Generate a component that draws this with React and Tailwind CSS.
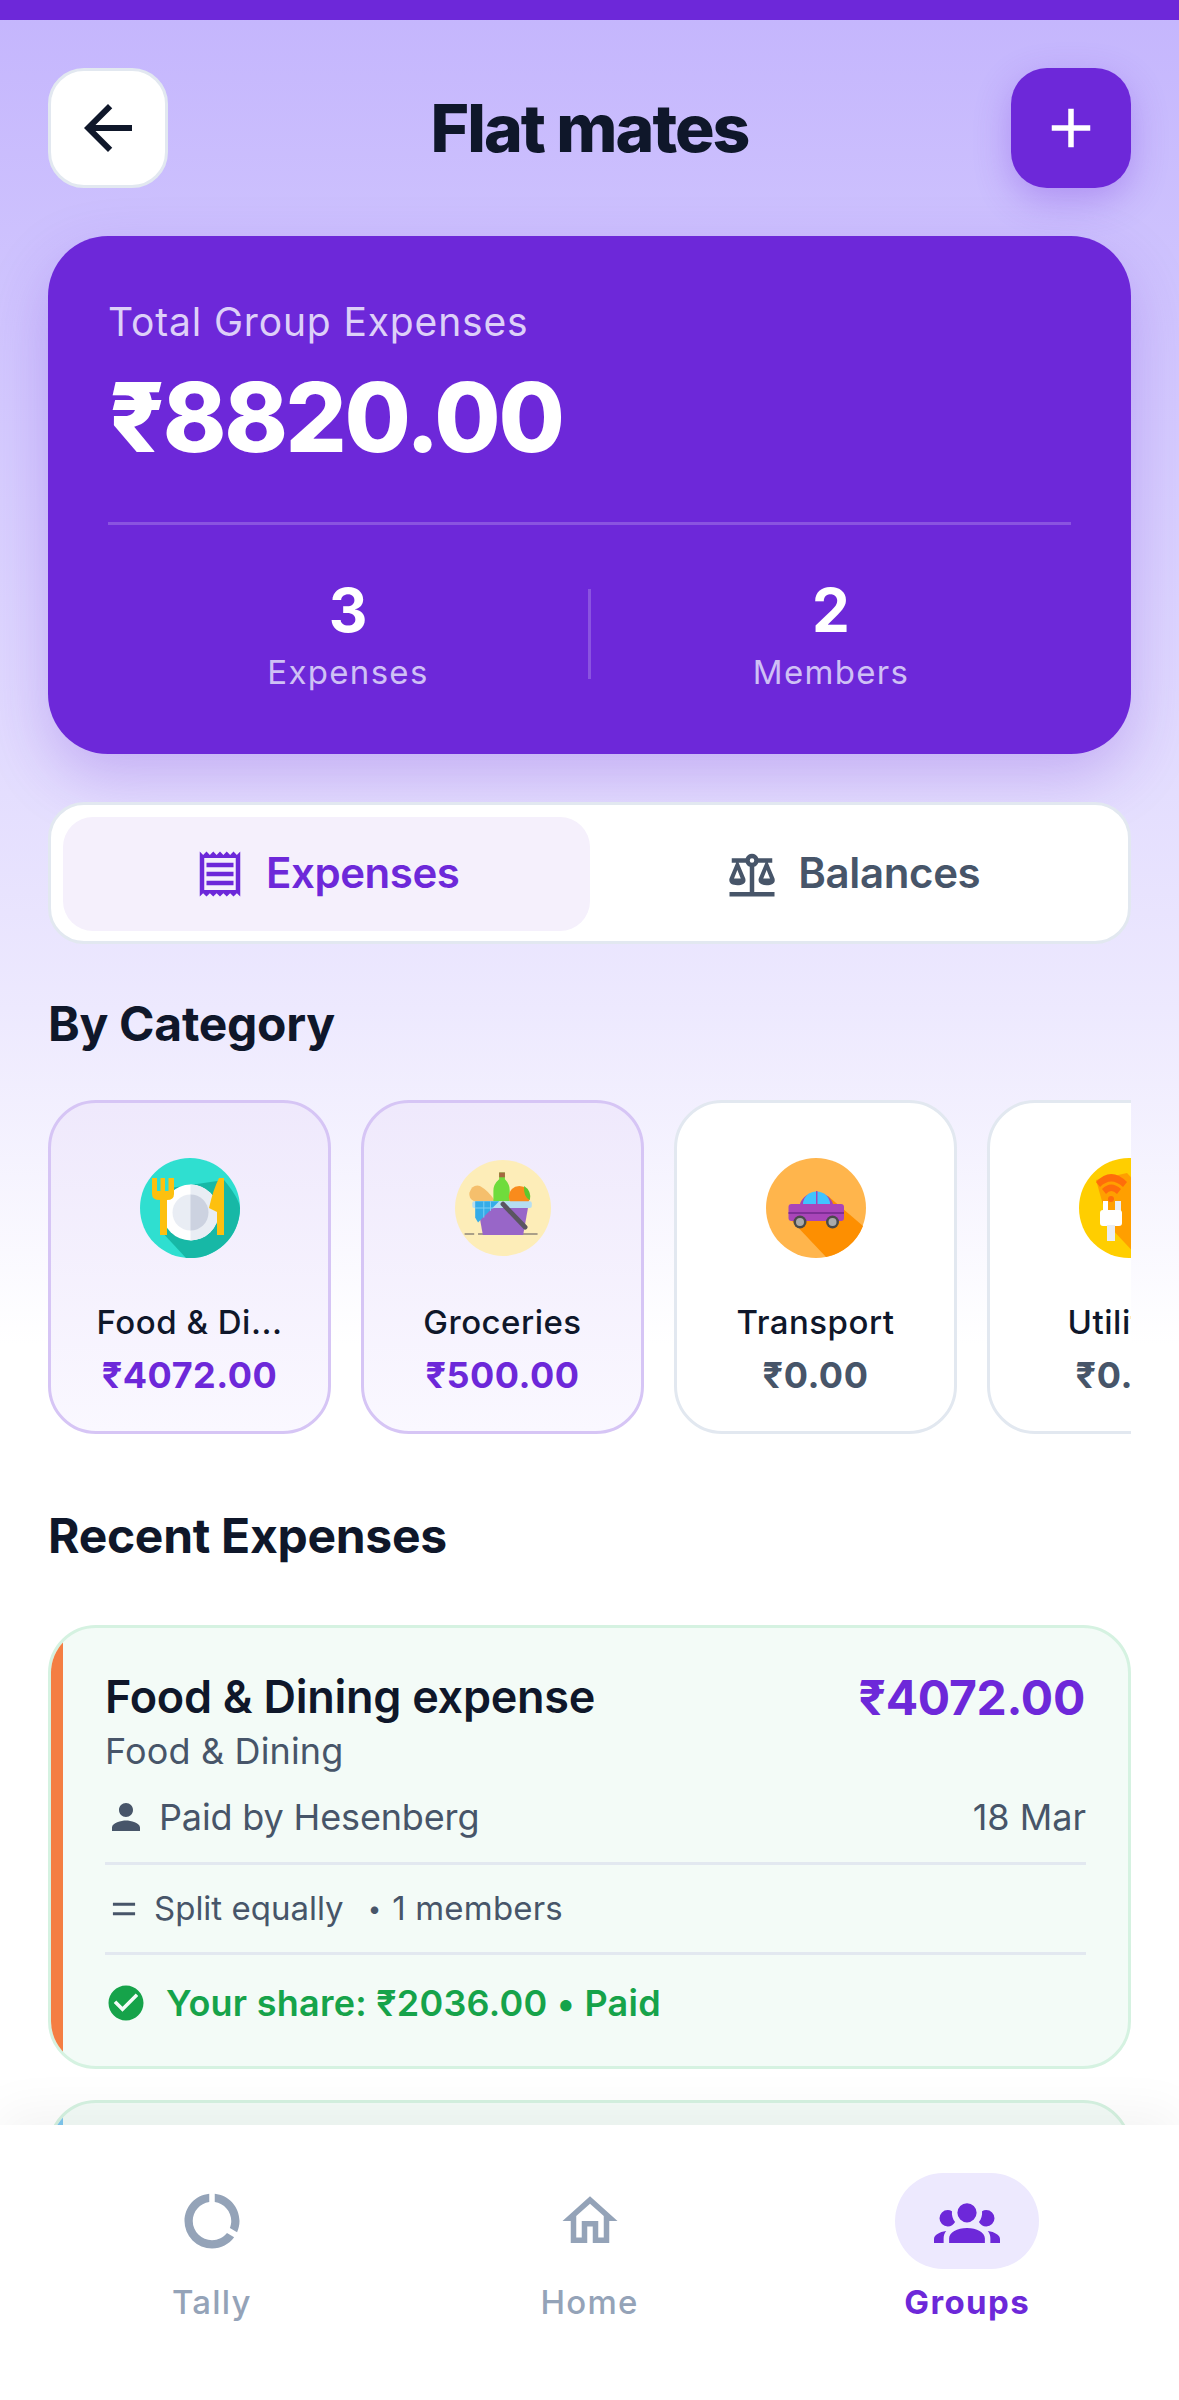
import {
  MdAdd,
  MdArrowBack,
  MdCheckCircle,
  MdOutlineHome,
  MdOutlineReceipt,
  MdPerson,
} from "react-icons/md";

const ScaleIcon = ({ className }) => (
  <svg viewBox="0 0 24 24" fill="currentColor" className={className}>
    <path d="M12,3C10.73,3 9.6,3.8 9.18,5H3V7H4.95L2,14C1.53,16 3,17 5.5,17C8,17 9.56,16 9,14L6.05,7H9.17C9.5,7.85 10.15,8.5 11,8.83V20H2V22H22V20H13V8.82C13.85,8.5 14.5,7.85 14.82,7H17.95L15,14C14.53,16 16,17 18.5,17C21,17 22.56,16 22,14L19.05,7H21V5H14.83C14.4,3.8 13.27,3 12,3M12,5A1,1 0 0,1 13,6A1,1 0 0,1 12,7A1,1 0 0,1 11,6A1,1 0 0,1 12,5M5.5,10.25L7,14H4L5.5,10.25M18.5,10.25L20,14H17L18.5,10.25Z" />
  </svg>
);

const DonutIcon = ({ className }) => (
  <svg viewBox="0 0 24 24" fill="currentColor" className={className}>
    <path d="M13,2.05V5.08C16.39,5.57 19,8.47 19,12C19,12.9 18.82,13.75 18.5,14.54L21.12,16.07C21.68,14.83 22,13.45 22,12C22,6.82 18.05,2.55 13,2.05M12,19A7,7 0 0,1 5,12C5,8.47 7.61,5.57 11,5.08V2.05C5.94,2.55 2,6.81 2,12A10,10 0 0,0 12,22C15.3,22 18.23,20.39 20.05,17.91L17.45,16.38C16.17,18 14.21,19 12,19Z" />
  </svg>
);

const GroupIcon = ({ className }) => (
  <svg viewBox="0 0 24 24" fill="currentColor" className={className}>
    <path d="M12,5.5A3.5,3.5 0 0,1 15.5,9A3.5,3.5 0 0,1 12,12.5A3.5,3.5 0 0,1 8.5,9A3.5,3.5 0 0,1 12,5.5M5,8C5.56,8 6.08,8.15 6.53,8.42C6.38,9.85 6.8,11.27 7.66,12.38C7.16,13.34 6.16,14 5,14A3,3 0 0,1 2,11A3,3 0 0,1 5,8M19,8A3,3 0 0,1 22,11A3,3 0 0,1 19,14C17.84,14 16.84,13.34 16.34,12.38C17.2,11.27 17.62,9.85 17.47,8.42C17.92,8.15 18.44,8 19,8M5.5,18.25C5.5,16.18 8.41,14.5 12,14.5C15.59,14.5 18.5,16.18 18.5,18.25V20H5.5V18.25M0,20V18.5C0,17.11 1.89,15.94 4.45,15.6C3.86,16.28 3.5,17.22 3.5,18.25V20H0M24,20H20.5V18.25C20.5,17.22 20.14,16.28 19.55,15.6C22.11,15.94 24,17.11 24,18.5V20Z" />
  </svg>
);

const EqualIcon = ({ className }) => (
  <svg viewBox="0 0 24 24" fill="currentColor" className={className}>
    <path d="M19,10H5V8H19V10M19,16H5V14H19V16Z" />
  </svg>
);

const FoodIcon = () => (
  <svg viewBox="0 0 100 100" className="w-[100px] h-[100px]">
    <circle cx="50" cy="50" r="50" fill="#2fdfd0" />
    <path d="M20 72 L46 100 A50 50 0 0 0 100 50 Q99 40 84 22 L30 30 Z" fill="#17b8a6" />
    <circle cx="50.5" cy="54.5" r="28" fill="#ffffff" />
    <path d="M50.5 26.5 A28 28 0 0 1 50.5 82.5 Z" fill="#e9edf4" />
    <circle cx="50.5" cy="54.5" r="18" fill="#e9edf4" />
    <path d="M50.5 36.5 A18 18 0 0 1 50.5 72.5 Z" fill="#ccd2e0" />
    <path d="M12 20 H17 V33 H20.5 V20 H25 V33 H28.5 V20 H34 V36 Q34 42 27 42 V77 H20 V42 Q12 42 12 36 Z" fill="#fdc00f" />
    <path d="M79 20 H84 V77 H77 V54 L69 50 Q73 32 79 20 Z" fill="#fdc00f" />
  </svg>
);

const BasketIcon = () => (
  <svg viewBox="0 0 100 100" className="w-[96px] h-[96px]">
    <circle cx="50" cy="50" r="50" fill="#fdedb8" />
    <path d="M10 77 H20 M24 77 H86" stroke="#8f8578" strokeWidth="1.6" />
    <path d="M15 34 Q18 25 26 27 Q35 32 42 43 H20 Q14 40 15 34 Z" fill="#f5bf6c" />
    <path d="M46 13 H52 V20 Q57 25 57 32 V43 H40 V32 Q40 25 46 20 Z" fill="#6fdc3c" />
    <rect x="46" y="13" width="6" height="5" fill="#a5673f" />
    <circle cx="67" cy="38" r="11" fill="#f98b1c" />
    <path d="M72 27 Q80 32 78 42 Q71 38 72 27 Z" fill="#5fc82e" />
    <path d="M24 50 H76 L71 78 H29 Z" fill="#9866c8" />
    <rect x="18" y="43" width="62" height="7" rx="2" fill="#b5def2" />
    <path d="M21 43 H46 L24 65 L21 60 Z" fill="#35ace8" />
    <path d="M30 43 V60 M37 43 V53 M21 50 H40" stroke="#7fd0f5" strokeWidth="1" />
    <path d="M50 46 L73 70" stroke="#5a5560" strokeWidth="5" strokeLinecap="round" />
  </svg>
);

const CarIcon = () => (
  <svg viewBox="0 0 100 100" className="w-[100px] h-[100px]">
    <circle cx="50" cy="50" r="50" fill="#ffb54c" />
    <path d="M62 38 L97 68 A50 50 0 0 1 60 99 L26 63 Z" fill="#fd8f01" />
    <path d="M34 46 A17 15 0 0 1 67 46 Z" fill="#a146b8" />
    <path d="M37 46 A13.5 12.5 0 0 1 64 46 Z" fill="#40c4ff" />
    <rect x="50" y="33" width="1.5" height="13" fill="#a146b8" />
    <rect x="22.5" y="46" width="55.5" height="17" rx="3" fill="#a945b9" />
    <rect x="22.5" y="54" width="55.5" height="2" fill="#7f2f97" />
    <circle cx="34" cy="64" r="6.5" fill="#4a4a4a" />
    <circle cx="34" cy="64" r="4" fill="#aaa" />
    <circle cx="66.5" cy="64" r="6.5" fill="#4a4a4a" />
    <circle cx="66.5" cy="64" r="4" fill="#aaa" />
  </svg>
);

const UtilIcon = () => (
  <svg viewBox="0 0 100 100" className="w-[100px] h-[100px] shrink-0">
    <circle cx="50" cy="50" r="50" fill="#ffce00" />
    <path d="M17 22 L48 15 L100 70 L75 96 L60 100 L30 68 Z" fill="#ff9f00" />
    <path d="M17 24 Q32 8 48 24 L44 29 Q32 18 21 29 Z" fill="#ff6d0a" />
    <path d="M23 31 Q32 22 42 31 L38 36 Q32 30 27 36 Z" fill="#ff6d0a" />
    <circle cx="32" cy="41" r="3" fill="#ff6d0a" />
    <rect x="24" y="43" width="5" height="10" fill="#ffffff" />
    <rect x="36" y="43" width="6" height="10" fill="#e9edf4" />
    <rect x="21" y="52" width="22" height="16" rx="3" fill="#ffffff" />
    <rect x="28" y="67" width="8" height="16" fill="#e9edf4" />
  </svg>
);

const categories = [
  { name: "Food & Di...", amount: "₹4072.00", icon: <FoodIcon />, active: true },
  { name: "Groceries", amount: "₹500.00", icon: <BasketIcon />, active: true },
  { name: "Transport", amount: "₹0.00", icon: <CarIcon /> },
  { name: "Utilities", amount: "₹0.00", icon: <UtilIcon /> },
];

const CategoryCard = ({ item }) => (
  <div
    className={`w-[283px] h-[334px] shrink-0 rounded-[48px] border-[3px] flex flex-col items-center pt-[55px] ${
      item.active
        ? "border-[#d6c5f5] bg-gradient-to-b from-[#efe9fc] to-[#faf8ff]"
        : "border-[#e2e8f0] bg-white"
    }`}
  >
    <div className="h-[100px] flex items-center justify-center">{item.icon}</div>
    <div className="mt-[42px] text-[33px] leading-[44px] font-medium tracking-[0.5px] text-[#0f172a]">{item.name}</div>
    <div
      className={`mt-[9px] text-[36px] leading-[44px] font-bold tracking-[0.5px] ${
        item.active ? "text-[#6d28d9]" : "text-[#475569]"
      }`}
    >
      {item.amount}
    </div>
  </div>
);

const NavItem = ({ icon, label, active }) => (
  <div className="flex-1 flex flex-col items-center">
    <div className={`w-[144px] h-[96px] rounded-[48px] flex items-center justify-center ${active ? "bg-[#ede9fe]" : ""}`}>
      {icon}
    </div>
    <div className={`mt-[13px] text-[33px] leading-[40px] ${active ? "font-bold tracking-[1.4px] text-[#6d28d9]" : "font-medium tracking-[1.2px] text-[#94a3b8]"}`}>
      {label}
    </div>
  </div>
);

export default function App() {
  return (
    <div className="w-[1179px] h-[2400px] overflow-hidden flex flex-col bg-gradient-to-b from-[#c4b5fd] via-[#ede9fe] via-[42%] to-white to-[56%] font-['Inter',sans-serif]">
      <div className="h-5 bg-[#6d28d9] shrink-0" />

      <div className="flex-1 min-h-0 overflow-hidden px-12 pt-12">
        {/* Header */}
        <div className="flex items-center justify-between">
          <div className="w-[120px] h-[120px] rounded-[36px] bg-white border-[3px] border-[#e2e8f0] flex items-center justify-center">
            <MdArrowBack className="w-[72px] h-[72px] text-[#0f172a]" />
          </div>
          <div className="text-[66px] font-extrabold tracking-[-2px] text-[#0f172a]">Flat mates</div>
          <div className="w-[120px] h-[120px] rounded-[36px] bg-[#6d28d9] shadow-[0_12px_36px_rgba(109,40,217,0.3)] flex items-center justify-center">
            <MdAdd className="w-[66px] h-[66px] text-white" />
          </div>
        </div>

        {/* Total card */}
        <div className="mt-12 h-[518px] rounded-[60px] bg-[#6d28d9] shadow-[0_24px_60px_rgba(109,40,217,0.25)] px-[60px] pt-[60px]">
          <div className="text-[39px] leading-[52px] tracking-[0.85px] text-[#ddd0f8]">Total Group Expenses</div>
          <div className="mt-[14px] pl-[1px] text-[96px] leading-[110px] font-extrabold tracking-[-2.3px] text-white">₹8820.00</div>
          <div className="mt-[50px] h-[3px] bg-white/20" />
          <div className="mt-[49px] flex items-center">
            <div className="flex-1 text-center">
              <div className="text-[60px] leading-[72px] font-bold text-white">3</div>
              <div className="mt-[4px] text-[33px] leading-[44px] tracking-[1.3px] text-[#cfc0f5]">Expenses</div>
            </div>
            <div className="w-[3px] h-[90px] bg-white/20" />
            <div className="flex-1 text-center">
              <div className="text-[60px] leading-[72px] font-bold text-white">2</div>
              <div className="mt-[4px] text-[33px] leading-[44px] tracking-[1.3px] text-[#cfc0f5]">Members</div>
            </div>
          </div>
        </div>

        {/* Tabs */}
        <div className="mt-12 h-[142px] rounded-[36px] bg-white border-[3px] border-[#e2e8f0] pt-3 px-3 pb-[10px] flex">
          <div className="flex-1 rounded-[30px] bg-[#f5f0fc] flex items-center justify-center gap-[19px]">
            <MdOutlineReceipt className="w-[54px] h-[54px] text-[#6d28d9]" />
            <span className="text-[42px] leading-[50px] pb-[2px] font-semibold tracking-[-0.45px] text-[#6d28d9]">Expenses</span>
          </div>
          <div className="flex-1 flex items-center justify-center gap-[19px]">
            <ScaleIcon className="w-[54px] h-[54px] text-[#475569]" />
            <span className="text-[42px] leading-[50px] pb-[2px] font-semibold tracking-[-0.35px] text-[#475569]">Balances</span>
          </div>
        </div>

        {/* By category */}
        <div className="mt-[50px] text-[48px] leading-[60px] font-bold tracking-[-0.3px] text-[#0f172a]">By Category</div>
        <div className="mt-[46px] flex gap-[30px] overflow-hidden">
          {categories.map((c) => (
            <CategoryCard key={c.name} item={c} />
          ))}
        </div>

        {/* Recent */}
        <div className="mt-[72px] text-[48px] leading-[60px] font-bold tracking-[-0.3px] text-[#0f172a]">Recent Expenses</div>
        <div className="mt-[59px] h-[444px] rounded-[48px] border-[3px] border-[#d5f2e1] bg-[#f3fbf7] overflow-hidden flex">
          <div className="w-3 bg-[#f47e43] shrink-0" />
          <div className="flex-1 px-[42px] pt-[41px]">
            <div className="flex items-center justify-between h-[56px]">
              <div className="text-[45px] leading-[56px] font-semibold tracking-[-0.27px] text-[#0f172a]">Food &amp; Dining expense</div>
              <div className="text-[48px] leading-[54px] font-bold tracking-[-0.3px] text-[#6d28d9] pt-[2px] pr-[1px]">₹4072.00</div>
            </div>
            <div className="text-[36px] leading-[46px] tracking-[0.15px] text-[#475569] mt-[3px]">Food &amp; Dining</div>
            <div className="mt-[20px] flex items-center justify-between text-[36px] leading-[46px] text-[#475569]">
              <div className="flex items-center gap-[12px]">
                <MdPerson className="w-[42px] h-[42px]" />
                <span className="tracking-[-0.15px]">Paid by Hesenberg</span>
              </div>
              <span>18 Mar</span>
            </div>
            <div className="mt-[22px] h-[3px] bg-[#e2e8f0]" />
            <div className="h-[87px] flex items-center text-[33px] text-[#475569]">
              <EqualIcon className="w-[38px] h-[38px]" />
              <span className="ml-[11px]">Split equally</span>
              <span className="ml-[24px] text-[24px] mr-[11px]">•</span>
              <span className="tracking-[0.2px]">1 members</span>
            </div>
            <div className="h-[3px] bg-[#e2e8f0]" />
            <div className="h-[96px] flex items-center gap-[19px] text-[36px] font-semibold tracking-[0.25px] text-[#16a34a]">
              <MdCheckCircle className="w-[42px] h-[42px]" />
              <span>Your share: ₹2036.00 • Paid</span>
            </div>
          </div>
        </div>
        <div className="mt-[31px] h-[200px] rounded-[48px] border-[3px] border-[#d5f2e1] bg-[#f3fbf7] overflow-hidden flex">
          <div className="w-3 bg-[#7ec8ef] shrink-0" />
        </div>
      </div>

      {/* Bottom nav */}
      <div className="relative shrink-0 h-[275px] bg-white shadow-[0_-12px_48px_rgba(0,0,0,0.05)] flex px-[23px] pt-12">
        <NavItem label="Tally" icon={<DonutIcon className="w-[66px] h-[66px] text-[#94a3b8]" />} />
        <NavItem label="Home" icon={<MdOutlineHome className="w-[66px] h-[66px] text-[#94a3b8]" />} />
        <NavItem active label="Groups" icon={<GroupIcon className="w-[66px] h-[66px] text-[#6d28d9]" />} />
      </div>
    </div>
  );
}
